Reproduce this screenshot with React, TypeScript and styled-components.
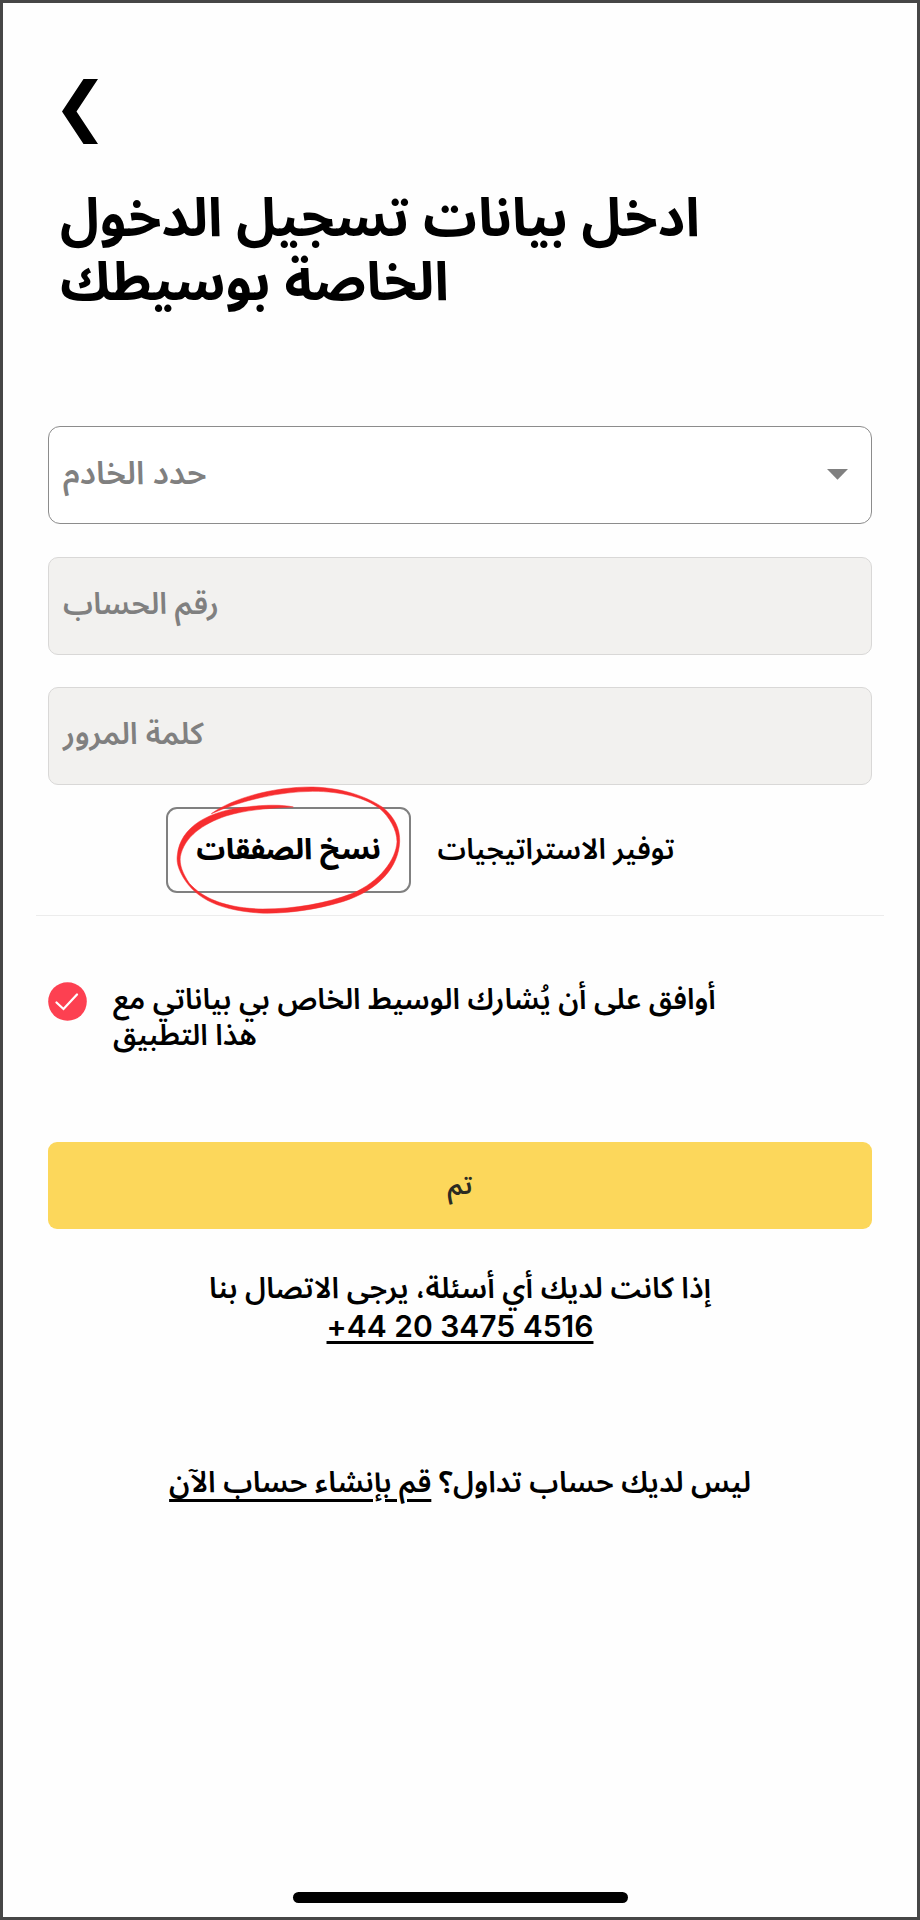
import React from 'react';
import styled, { createGlobalStyle } from 'styled-components';

const arabic = '"Noto Sans Arabic", "DejaVu Sans", sans-serif';

const GlobalStyle = createGlobalStyle`
  * { box-sizing: border-box; }
  body { margin: 0; background: #fff; }
`;

const Screen = styled.main`
  display: flex;
  flex-direction: column;
  width: 920px;
  height: 1920px;
  padding: 76px 45px 0;
  border: 3px solid #464646;
  background: #fefefe;
  color: #000;
  font-family: ${arabic};
  overflow: hidden;
`;

const BackButton = styled.button`
  display: block;
  width: 36px;
  height: 65px;
  margin-left: 14px;
  padding: 0;
  border: 0;
  background: none;
  svg { display: block; }
`;

const Title = styled.h1`
  direction: rtl;
  width: 642px;
  height: 128px;
  margin: 43px 0 0 12px;
  text-align: left;
  font-weight: 700;
  font-size: 53.5px;
  line-height: 64px;
  white-space: nowrap;
`;

const Form = styled.form`
  display: flex;
  flex-direction: column;
  gap: 32.5px;
  margin-top: 111px;
`;

const Field = styled.div<{ $disabled?: boolean }>`
  display: flex;
  align-items: center;
  justify-content: space-between;
  height: 98px;
  padding: 0 23px 2px 14px;
  border: 1px solid ${p => (p.$disabled ? '#d9d8d7' : '#8c8c8c')};
  border-radius: ${p => (p.$disabled ? 10 : 12)}px;
  background: ${p => (p.$disabled ? '#f2f1ef' : '#fff')};
`;

const FieldLabel = styled.span<{ $size: number }>`
  color: #808080;
  font-weight: 600;
  font-size: ${p => p.$size}px;
  line-height: 40px;
  white-space: nowrap;
`;

const Caret = styled.svg`
  display: block;
`;

const Tabs = styled.div`
  position: relative;
  display: flex;
  align-items: center;
  height: 131px;
  margin: 0 -12px;
  padding: 0 0 0 130px;
  border-bottom: 1px solid #ececec;
`;

const Tab = styled.div<{ $active?: boolean }>`
  direction: rtl;
  display: flex;
  align-items: center;
  justify-content: center;
  width: ${p => (p.$active ? 245 : 290)}px;
  height: 86px;
  border: 2px solid ${p => (p.$active ? '#808080' : 'transparent')};
  border-radius: 11px;
  font-weight: ${p => (p.$active ? 800 : 600)};
  font-size: 28.5px;
  line-height: 40px;
  white-space: nowrap;
`;

const Ring = styled.svg`
  position: absolute;
  left: 130px;
  top: -5px;
`;

const Consent = styled.label`
  display: flex;
  align-items: flex-start;
  gap: 26px;
  margin-top: 65px;
`;

const CheckMark = styled.svg`
  flex: none;
  margin-top: 1px;
`;

const ConsentText = styled.p`
  direction: rtl;
  width: 606px;
  margin: 1px 0 -1px;
  text-align: left;
  font-weight: 600;
  font-size: 28.9px;
  line-height: 36px;
  white-space: nowrap;
`;

const Submit = styled.button`
  height: 87px;
  margin-top: 89px;
  padding: 0;
  border: 0;
  border-radius: 9px;
  background: #fcd75b;
  color: #2b2b22;
  font-family: ${arabic};
  font-weight: 600;
  font-size: 26px;
  line-height: 40px;
`;

const Help = styled.p`
  direction: rtl;
  margin: 42px 0 0;
  text-align: center;
  font-weight: 600;
  font-size: 29.2px;
  line-height: 37px;
`;

const Phone = styled.a`
  direction: ltr;
  unicode-bidi: isolate;
  color: inherit;
  font-family: Inter, sans-serif;
  font-weight: 600;
  font-size: 30px;
  letter-spacing: 0.5px;
  text-decoration: underline 3px;
  text-underline-offset: 4px;
  text-decoration-skip-ink: none;
`;

const SignUp = styled(Help)`
  margin-top: 118px;
`;

const SignUpLink = styled.a`
  color: inherit;
  text-decoration: underline 3px;
  text-underline-offset: 7px;
`;

const HomeBar = styled.div`
  align-self: center;
  width: 335px;
  height: 11px;
  margin: auto 0 14px;
  border-radius: 6px;
  background: #000;
`;

export default function App() {
  return (
    <>
      <GlobalStyle />
      <Screen>
        <BackButton aria-label="رجوع" type="button">
          <svg width="36" height="65" viewBox="0 0 36 65">
            <path d="M0 32.5 21.5 0H36L14.5 32.5 36 65H21.5z" fill="#000" />
          </svg>
        </BackButton>
        <Title>
          ادخل بيانات تسجيل الدخول
          <br />
          الخاصة بوسيطك
        </Title>
        <Form>
          <Field>
            <FieldLabel $size={32.2}>حدد الخادم</FieldLabel>
            <Caret width="21" height="11" viewBox="0 0 21 11">
              <path d="M0 0h21L10.5 10.7z" fill="#808080" />
            </Caret>
          </Field>
          <Field $disabled>
            <FieldLabel $size={30}>رقم الحساب</FieldLabel>
          </Field>
          <Field $disabled>
            <FieldLabel $size={30.5}>كلمة المرور</FieldLabel>
          </Field>
        </Form>
        <Tabs>
          <Tab $active>نسخ الصفقات</Tab>
          <Tab>توفير الاستراتيجيات</Tab>
          <Ring width="250" height="140" viewBox="0 0 750 420" fill="#f62d2f" stroke="#f62d2f" strokeWidth="1.5">
            <path d="M136 101C200 55 320 20 440 21C540 24 610 55 650 82C690 115 702 150 701 185C698 260 640 330 530 365C440 392 350 402 280 399C150 390 80 350 45 280C33 255 32 240 34 225C42 140 130 90 250 80C290 75 350 73 382 81C300 85 240 90 180 108C110 132 55 170 43 230C40 255 50 280 70 310C110 355 180 385 290 387C390 387 480 370 560 340C640 305 690 240 693 185C693 150 670 110 640 85C600 55 530 34 440 34C340 35 230 60 136 101Z" />
          </Ring>
        </Tabs>
        <Consent>
          <CheckMark width="39" height="39" viewBox="0 0 39 39">
            <circle cx="19.5" cy="19.5" r="19.3" fill="#fd4051" />
            <path d="M8.5 20.5 15.5 27 29 12.5" fill="none" stroke="#fff" strokeWidth="2.3" strokeLinecap="round" />
          </CheckMark>
          <ConsentText>
            أوافق على أن يُشارك الوسيط الخاص بي بياناتي مع
            <br />
            هذا التطبيق
          </ConsentText>
        </Consent>
        <Submit type="button">تم</Submit>
        <Help>
          إذا كانت لديك أي أسئلة، يرجى الاتصال بنا
          <br />
          <Phone>+44 20 3475 4516</Phone>
        </Help>
        <SignUp>
          ليس لديك حساب تداول؟ <SignUpLink>قم بإنشاء حساب الآن</SignUpLink>
        </SignUp>
        <HomeBar />
      </Screen>
    </>
  );
}
